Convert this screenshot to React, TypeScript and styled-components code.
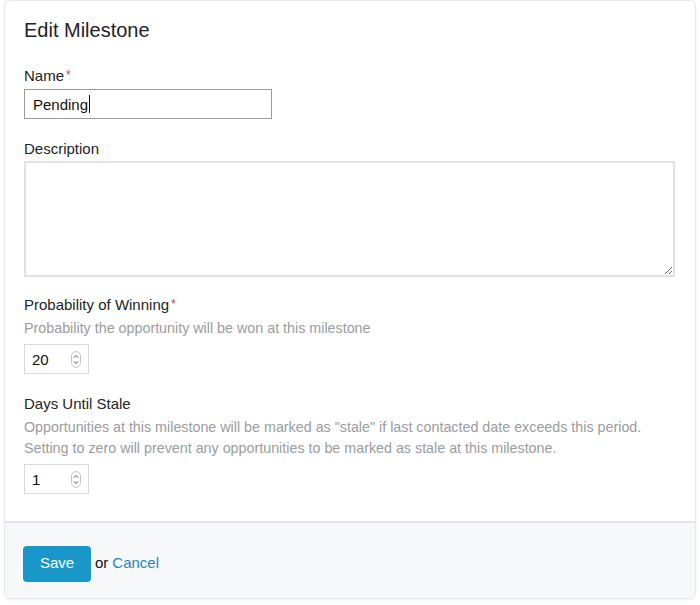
import React from "react";
import styled, { createGlobalStyle } from "styled-components";

const GlobalStyle = createGlobalStyle`
  html, body {
    margin: 0;
    padding: 0;
    background: #ffffff;
  }
  body {
    font-family: "Liberation Sans", Arial, Helvetica, sans-serif;
    color: #222428;
    -webkit-font-smoothing: antialiased;
  }
`;

const Page = styled.div`
  width: 700px;
  height: 605px;
  box-sizing: border-box;
  padding: 0 4px 6px 4px;
`;

const Card = styled.div`
  width: 692px;
  box-sizing: border-box;
  background: #ffffff;
  border: 1px solid #e6e8eb;
  border-radius: 6px;
  box-shadow: 0 1px 3px rgba(0, 0, 0, 0.05);
  overflow: hidden;
`;

const Body = styled.div`
  padding: 17px 20px 27px 19px;
`;

const Title = styled.h2`
  margin: 0 0 24px 0;
  font-size: 20px;
  line-height: 24px;
  font-weight: 400;
  color: #1f2226;
`;

const Field = styled.div<{ $gap?: number }>`
  margin-bottom: ${(p) => p.$gap ?? 20}px;
`;

const Label = styled.label<{ $space?: number }>`
  display: block;
  font-size: 15px;
  line-height: 20px;
  color: #222428;
  margin-bottom: ${(p) => p.$space ?? 3}px;
`;

const Required = styled.span`
  color: #e0352f;
  font-size: 12px;
  vertical-align: 2px;
  margin-left: 2px;
  line-height: 14px;
`;

const Help = styled.p`
  margin: 0 0 5px 0;
  font-size: 14.3px;
  line-height: 21px;
  color: #9a9ca0;
`;

const TextField = styled.div`
  width: 248px;
  height: 30px;
  box-sizing: border-box;
  border: 1px solid #9b9b9b;
  padding: 0 8px;
  display: flex;
  align-items: center;
  font-size: 15px;
  color: #111;
`;

const Caret = styled.span`
  display: inline-block;
  width: 1px;
  height: 18px;
  background: #111;
  margin-left: 1px;
`;

const TextArea = styled.textarea`
  display: block;
  width: 651px;
  height: 116px;
  box-sizing: border-box;
  border: 2px solid #e2e2e2;
  border-radius: 0;
  padding: 6px 8px;
  font-family: inherit;
  font-size: 15px;
  resize: vertical;
  outline: none;
`;

const NumberBox = styled.div`
  width: 65px;
  height: 30px;
  box-sizing: border-box;
  border: 1px solid #d9d9d9;
  display: flex;
  align-items: center;
  padding: 0 7px;
`;

const NumberValue = styled.span`
  flex: 1;
  font-size: 15px;
  color: #111;
`;

const Footer = styled.div`
  background: #f6f8fa;
  border-top: 2px solid #e3e5e8;
  padding: 23px 18px 16px 18px;
  display: flex;
  align-items: center;
  font-size: 15px;
`;

const SaveButton = styled.button`
  width: 68px;
  height: 36px;
  border: none;
  border-radius: 4px;
  background: #1997c9;
  color: #ffffff;
  font-family: inherit;
  font-size: 15px;
  line-height: 18px;
  padding: 0 0 3px 0;
  cursor: pointer;
  margin-right: 4px;
`;

const Or = styled.span`
  color: #111;
  margin-right: 4px;
  line-height: 18px;
  padding-bottom: 3px;
`;

const Link = styled.a`
  color: #1a88bd;
  text-decoration: none;
  cursor: pointer;
  line-height: 18px;
  padding-bottom: 3px;
`;

const Stepper = () => (
  <svg width="10" height="17" viewBox="0 0 10 17">
    <rect x="0.5" y="0.5" width="9" height="16" rx="4.5" fill="#fafafa" stroke="#c8c8c8" />
    <path d="M3 6.5 L5 4.5 L7 6.5" fill="none" stroke="#555" strokeWidth="1" />
    <path d="M3 10.5 L5 12.5 L7 10.5" fill="none" stroke="#555" strokeWidth="1" />
  </svg>
);

const NumberInput = ({ value }: { value: string }) => (
  <NumberBox>
    <NumberValue>{value}</NumberValue>
    <Stepper />
  </NumberBox>
);

export default function App() {
  return (
    <>
      <GlobalStyle />
      <Page>
        <Card>
          <Body>
            <Title>Edit Milestone</Title>
            <Field>
              <Label>
                Name<Required>*</Required>
              </Label>
              <TextField>
                Pending
                <Caret />
              </TextField>
            </Field>
            <Field $gap={18}>
              <Label $space={2}>Description</Label>
              <TextArea />
            </Field>
            <Field>
              <Label>
                Probability of Winning<Required>*</Required>
              </Label>
              <Help>Probability the opportunity will be won at this milestone</Help>
              <NumberInput value="20" />
            </Field>
            <Field $gap={0}>
              <Label>Days Until Stale</Label>
              <Help>
                Opportunities at this milestone will be marked as "stale" if last contacted date
                exceeds this period.
                <br />
                Setting to zero will prevent any opportunities to be marked as stale at this
                milestone.
              </Help>
              <NumberInput value="1" />
            </Field>
          </Body>
          <Footer>
            <SaveButton>Save</SaveButton>
            <Or>or</Or>
            <Link>Cancel</Link>
          </Footer>
        </Card>
      </Page>
    </>
  );
}
